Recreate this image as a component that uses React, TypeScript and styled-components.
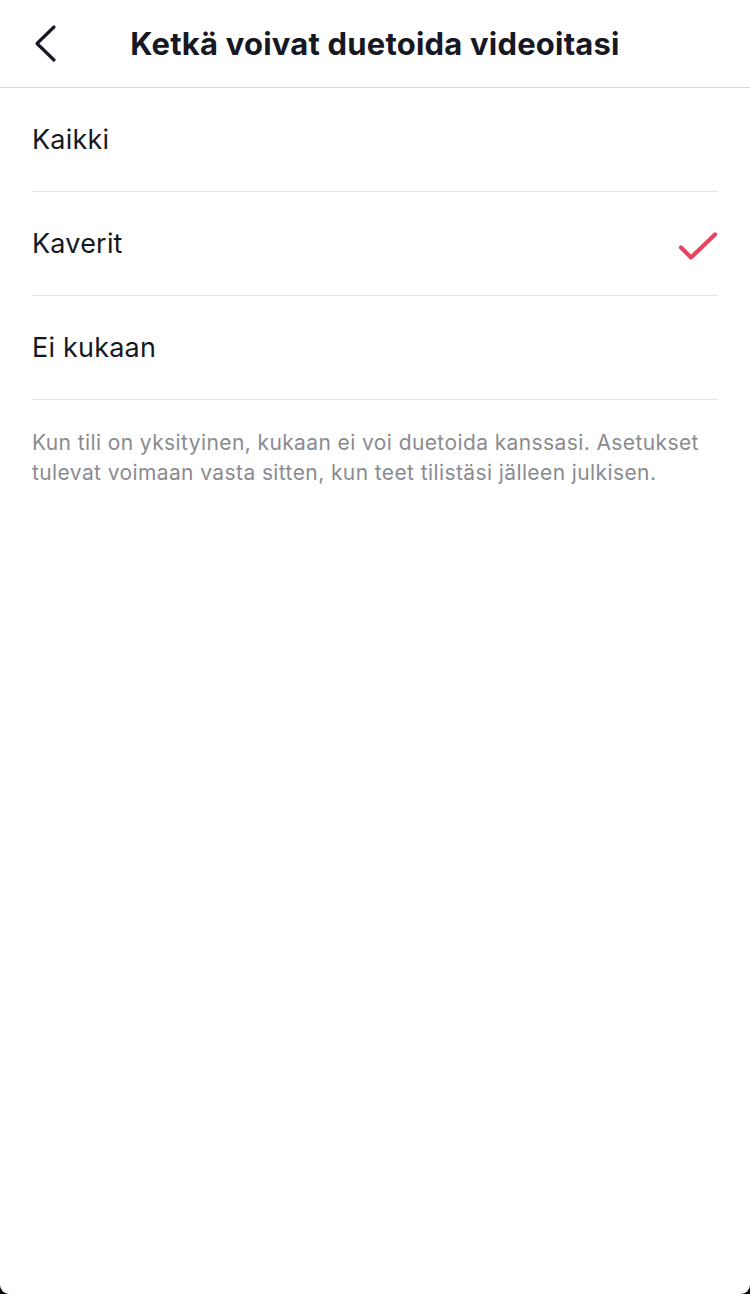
import styled, { createGlobalStyle } from "styled-components";

const GlobalStyle = createGlobalStyle`
  html, body {
    margin: 0;
    padding: 0;
    background: #000;
  }
  body {
    font-family: Inter, "Noto Sans", "Liberation Sans", sans-serif;
    -webkit-font-smoothing: antialiased;
  }
`

const Screen = styled.div`
  width: 750px;
  height: 1294px;
  background: #fff;
  border-radius: 0 0 9px 9px;
  overflow: hidden;
  display: flex;
  flex-direction: column;
`

const Header = styled.header`
  height: 87px;
  border-bottom: 1px solid #d6d6d8;
  display: flex;
  align-items: center;
  justify-content: center;
  position: relative;
`

const BackButton = styled.button`
  position: absolute;
  left: 24px;
  top: 18px;
  width: 50px;
  height: 50px;
  padding: 0;
  border: none;
  background: none;
  display: flex;
  align-items: center;
  justify-content: center;
`

const Title = styled.h1`
  margin: 0;
  font-size: 31px;
  font-weight: 700;
  color: #161823;
  letter-spacing: 0.2px;
`

const List = styled.ul`
  list-style: none;
  margin: 0;
  padding: 0 32px;
`

const Row = styled.li`
  height: 103px;
  border-bottom: 1px solid #e6e6e8;
  display: flex;
  align-items: center;
  justify-content: space-between;
`

const Label = styled.span`
  font-size: 27px;
  letter-spacing: 0.2px;
  color: #161823;
`

const Note = styled.p`
  margin: 0;
  padding: 28px 32px 0;
  font-size: 21px;
  letter-spacing: 0.4px;
  line-height: 30px;
  color: #8a8b91;
`

const options = ["Kaikki", "Kaverit", "Ei kukaan"];

function App() {
  const selected = "Kaverit";
  return (
    <>
      <GlobalStyle />
      <Screen>
        <Header>
          <BackButton aria-label="Takaisin">
            <svg width="50" height="50" viewBox="0 0 50 50">
              <path d="M30 9 L13 25.5 L30 42" fill="none" stroke="#161823" strokeWidth="3.2" strokeLinecap="round" strokeLinejoin="round" />
            </svg>
          </BackButton>
          <Title>Ketkä voivat duetoida videoitasi</Title>
        </Header>
        <List>
          {options.map((o) => (
            <Row key={o}>
              <Label>{o}</Label>
              {o === selected && (
                <svg width="44" height="34" viewBox="0 0 44 34">
                  <path d="M7 20.5 L17 30.5 L41 7.5" fill="none" stroke="#e8445f" strokeWidth="4.2" strokeLinecap="round" strokeLinejoin="round" />
                </svg>
              )}
            </Row>
          ))}
        </List>
        <Note>
          Kun tili on yksityinen, kukaan ei voi duetoida kanssasi. Asetukset tulevat voimaan vasta sitten, kun teet tilistäsi jälleen julkisen.
        </Note>
      </Screen>
    </>
  );
}

export default App;
